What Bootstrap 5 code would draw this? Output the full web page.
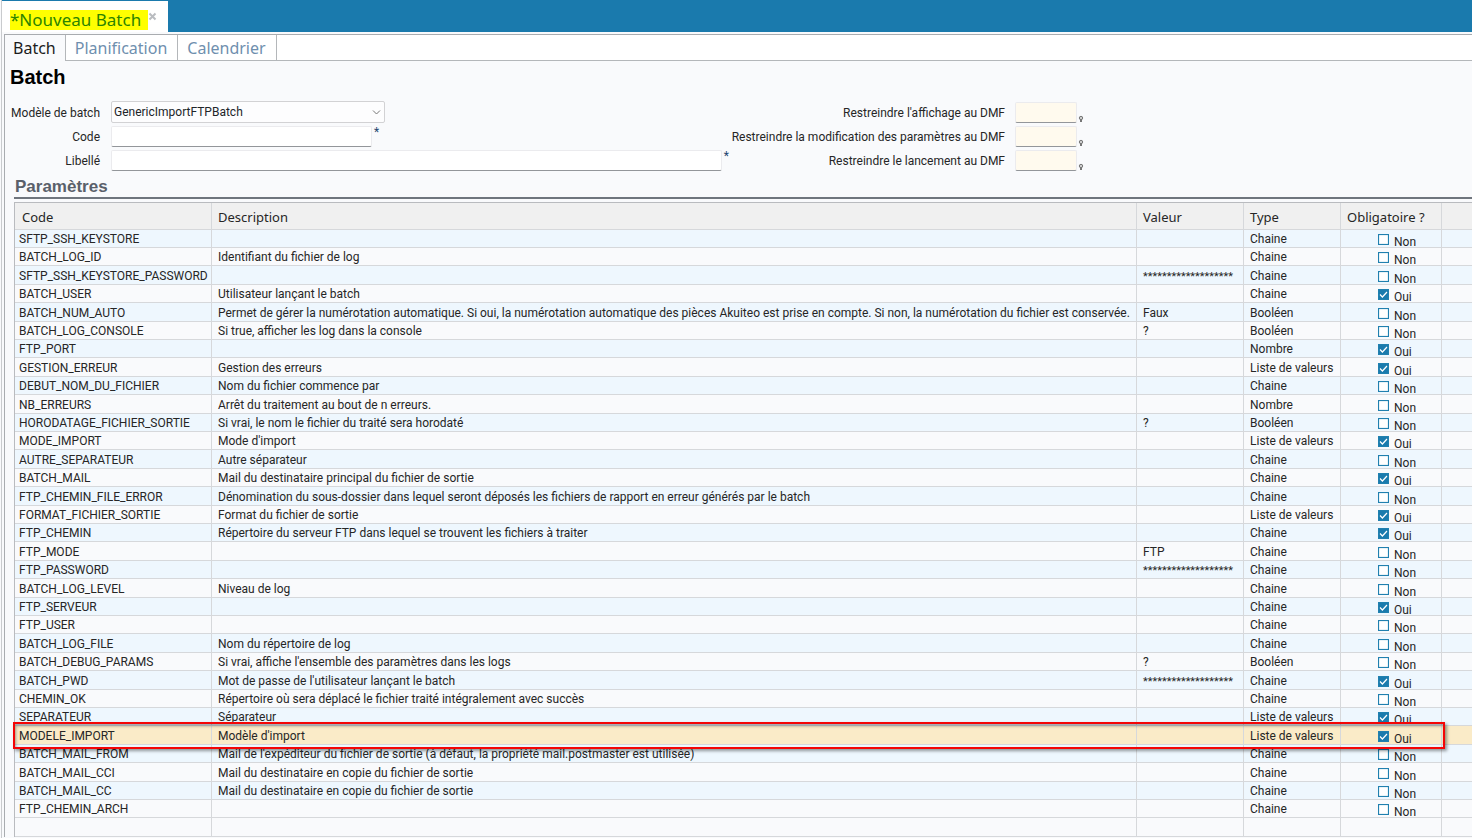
<!DOCTYPE html>
<html lang="fr">
<head>
<meta charset="utf-8">
<meta name="viewport" content="width=device-width, initial-scale=1">
<title>Nouveau Batch</title>
<link href="https://cdn.jsdelivr.net/npm/bootstrap@5.3.0/dist/css/bootstrap.min.css" rel="stylesheet">
<style>
  body { font-family: Roboto, "Noto Sans", sans-serif; font-size: 12px; line-height: 17px; color: #262626; background: #f9fafc; }
  .frame-edge { border-left: 1px solid #c9cbce; margin-left: 1px; padding-left: 2px; }
  .top-bar { height: 32px; background: #1a7aad; padding-top: 1px; margin-left: -2px; }
  .doc-tab { width: 166px; height: 31px; background: #fff; padding: 9px 0 0 8px; }
  .doc-title { background: #ff0; color: #2c8400; font-family: "Noto Sans", sans-serif; font-size: 17px; line-height: 20px; height: 20px; width: 138px; white-space: nowrap; text-decoration: none; }
  .close-tab { width: 9px; height: 9px; margin: 2px 0 0 0; }
  .panel { border-left: 1px solid #a9acb0; border-top: 1px solid #a9acb0; margin-top: 2px; }
  .sub-tabs { background: #fff; height: 26px; flex-wrap: nowrap; border-bottom: 1px solid #b4b7ba; }
  .sub-tabs .nav-link { font-family: "Noto Sans", sans-serif; font-size: 16px; line-height: 23px; height: 25px; padding: 2px 9px 0 8px; color: #6f8fae; border-right: 1px solid #b4b7ba; border-radius: 0; }
  .sub-tabs .nav-link.active { color: #1c1c1c; background: #f9fafc; height: 26px; }
  .sub-tabs .nav-link + .nav-link { padding: 2px 10px 0 9px; }
  h1, h2 { font-family: "Liberation Sans", Arial, sans-serif; font-weight: 700; margin: 0; }
  h1 { font-size: 20px; line-height: 24px; color: #000; padding: 4px 0 0 5px; }
  h2 { font-size: 17px; line-height: 20px; color: #5a606a; border-bottom: 2px solid #6f757d; padding: 1px 0 0 1px; }
  .batch-form { padding: 12px 0 2px 5px; }
  .left-fields { width: 719px; }
  .left-fields label { width: 90px; text-align: right; margin-right: 11px; white-space: nowrap; padding-top: 1px; }
  .right-fields label { width: 276px; text-align: right; margin-right: 10px; white-space: nowrap; padding-top: 1px; }
  .field-row { display: flex; align-items: center; height: 21px; margin-bottom: 3px; }
  .field-row.first { height: 22px; align-items: end; }
  .field-row.first label { line-height: 20px; }
  .line-input { height: 21px; padding: 0 3px; border: 1px solid #ebebee; border-bottom-color: #93969a; border-radius: 2px; background: #fff; font-size: 12px; }
  .line-input.dmf { width: 62px; background: #fffaee; }
  .code-input { width: 261px; }
  .model-select { width: 274px; height: 22px; padding: 0 2px; border: 1px solid #d2d2d4; border-radius: 2px; font-size: 12px; line-height: 20px; background-color: #fdfdfe; background-image: url("data:image/svg+xml,%3Csvg xmlns='http://www.w3.org/2000/svg' viewBox='0 0 9 9'%3E%3Cpath d='M1 2.5 4.5 6 8 2.5' fill='none' stroke='%23777'/%3E%3C/svg%3E"); background-position: right 3px center; background-size: 9px 9px; }
  .req { color: #23466e; align-self: start; margin-left: 2px; line-height: 12px; }
  .pin { align-self: end; margin: 0 0 0 1px; width: 6px; height: 8px; }
  .params { margin-left: 9px; }
  .params-table { table-layout: fixed; width: 100%; margin: 3px 0 0; border-collapse: separate; border-spacing: 0; border-top: 1px solid #b9bbbf; border-left: 1px solid #b9bbbf; color: inherit; }
  .params-table > :not(caption) > * > * { padding: 2px 6px 0; border: 0 solid #d6d8db; border-width: 0 1px 1px 0; white-space: nowrap; box-shadow: none; vertical-align: middle; height: 18px; line-height: 15px; color: inherit; }
  .params-table > thead > tr > th { height: 27px; background: #f0f0f0; font-family: "Noto Sans", sans-serif; font-size: 13px; font-weight: 400; line-height: 24px; }
  .params-table > tbody > tr > td:first-child { padding-left: 4px; }
  .params-table > thead > tr > th:first-child { padding-left: 7px; }
  .params-table > tbody > tr > td { background: #f9fafc; }
  .params-table > tbody > tr:nth-child(odd) > td { background: #eef7fe; }
  .params-table > tbody > tr:nth-child(5n+3) > td, .params-table > tbody > tr:nth-child(5n) > td { height: 19px; }
  .params-table > tbody > tr.chosen > td { background: #faebc8; }
  .params-table > tbody > tr.blank > td { background: #f9fafc; }
  .params-table tr > :last-child { border-right: 0; }
  .masked { font-size: 11px; }
  .chosen { position: relative; }
  .callout-box { position: absolute; left: -2px; right: 27px; top: -4px; bottom: -4px; border: 2px solid #f40505; box-shadow: 2px 2px 3px rgba(0,0,0,.4), inset 1px 2px 3px rgba(0,0,0,.35); pointer-events: none; }
  .flag { display: flex; align-items: center; height: 15px; margin-left: 31px; }
  .flag span { margin: 6px 0 0 5px; }
  .flag input { appearance: none; width: 11px; height: 11px; margin: 0; border: 1px solid #2080af; background: #fff; flex: none; box-shadow: inset 0 0 1px #2080af; }
  .flag input:checked { background: #1a7aad url("data:image/svg+xml,%3Csvg xmlns='http://www.w3.org/2000/svg' viewBox='0 0 9 9'%3E%3Cpath d='M1 4.5 3.4 7 8 2' fill='none' stroke='%23fff' stroke-width='1.2'/%3E%3C/svg%3E"); }
</style>
</head>
<body>
<div class="frame-edge min-vh-100">
  <header class="top-bar">
    <div class="doc-tab d-flex align-items-start">
      <a class="doc-title" href="#">*Nouveau Batch</a>
      <button class="close-tab btn p-0 border-0 d-flex" aria-label="Fermer"><svg width="9" height="9" viewBox="0 0 9 9"><path d="M1.5 1.5l6 6m0-6l-6 6" stroke="#b9bcc0" stroke-width="2"/></svg></button>
    </div>
  </header>
  <main class="panel">
    <nav class="nav sub-tabs">
      <a class="nav-link active" href="#">Batch</a>
      <a class="nav-link" href="#">Planification</a>
      <a class="nav-link" href="#">Calendrier</a>
    </nav>
    <h1>Batch</h1>
    <form class="batch-form d-flex">
      <div class="left-fields">
        <div class="field-row first"><label for="model">Modèle de batch</label><select id="model" class="form-select model-select"><option>GenericImportFTPBatch</option></select></div>
        <div class="field-row"><label for="code">Code</label><input id="code" class="line-input code-input" type="text"><span class="req">*</span></div>
        <div class="field-row"><label for="lib">Libellé</label><input id="lib" class="line-input flex-grow-1" type="text"><span class="req">*</span></div>
      </div>
      <div class="right-fields">
        <div class="field-row first"><label for="d1">Restreindre l'affichage au DMF</label><input id="d1" class="line-input dmf" type="text"><svg class="pin" viewBox="0 0 6 8"><circle cx="3" cy="3" r="1.7" fill="#ccc" stroke="#777"/><path d="M3 4.5V7" stroke="#777" stroke-width="2"/></svg></div>
        <div class="field-row"><label for="d2">Restreindre la modification des paramètres au DMF</label><input id="d2" class="line-input dmf" type="text"><svg class="pin" viewBox="0 0 6 8"><circle cx="3" cy="3" r="1.7" fill="#ccc" stroke="#777"/><path d="M3 4.5V7" stroke="#777" stroke-width="2"/></svg></div>
        <div class="field-row"><label for="d3">Restreindre le lancement au DMF</label><input id="d3" class="line-input dmf" type="text"><svg class="pin" viewBox="0 0 6 8"><circle cx="3" cy="3" r="1.7" fill="#ccc" stroke="#777"/><path d="M3 4.5V7" stroke="#777" stroke-width="2"/></svg></div>
      </div>
    </form>
    <section class="params">
      <h2>Paramètres</h2>
      <table class="table params-table">
        <colgroup><col width="197"><col><col width="107"><col width="97"><col width="101"><col width="30"></colgroup>
        <thead><tr><th>Code</th><th>Description</th><th>Valeur</th><th>Type</th><th>Obligatoire ?</th><th></th></tr></thead>
        <tbody id="rows"></tbody>
      </table>
    </section>
  </main>
</div>
<script src="https://cdn.jsdelivr.net/npm/bootstrap@5.3.0/dist/js/bootstrap.bundle.min.js"></script>
<script>
  const C = 'Chaine', B = 'Booléen', N = 'Nombre', L = 'Liste de valeurs', S = '<span class="masked">*******************</span>';
  const params = [
    ['SFTP_SSH_KEYSTORE', '', '', C, 0],
    ['BATCH_LOG_ID', 'Identifiant du fichier de log', '', C, 0],
    ['SFTP_SSH_KEYSTORE_PASSWORD', '', S, C, 0],
    ['BATCH_USER', 'Utilisateur lançant le batch', '', C, 1],
    ['BATCH_NUM_AUTO', 'Permet de gérer la numérotation automatique. Si oui, la numérotation automatique des pièces Akuiteo est prise en compte. Si non, la numérotation du fichier est conservée.', 'Faux', B, 0],
    ['BATCH_LOG_CONSOLE', 'Si true, afficher les log dans la console', '?', B, 0],
    ['FTP_PORT', '', '', N, 1],
    ['GESTION_ERREUR', 'Gestion des erreurs', '', L, 1],
    ['DEBUT_NOM_DU_FICHIER', 'Nom du fichier commence par', '', C, 0],
    ['NB_ERREURS', 'Arrêt du traitement au bout de n erreurs.', '', N, 0],
    ['HORODATAGE_FICHIER_SORTIE', 'Si vrai, le nom le fichier du traité sera horodaté', '?', B, 0],
    ['MODE_IMPORT', "Mode d'import", '', L, 1],
    ['AUTRE_SEPARATEUR', 'Autre séparateur', '', C, 0],
    ['BATCH_MAIL', 'Mail du destinataire principal du fichier de sortie', '', C, 1],
    ['FTP_CHEMIN_FILE_ERROR', 'Dénomination du sous-dossier dans lequel seront déposés les fichiers de rapport en erreur générés par le batch', '', C, 0],
    ['FORMAT_FICHIER_SORTIE', 'Format du fichier de sortie', '', L, 1],
    ['FTP_CHEMIN', 'Répertoire du serveur FTP dans lequel se trouvent les fichiers à traiter', '', C, 1],
    ['FTP_MODE', '', 'FTP', C, 0],
    ['FTP_PASSWORD', '', S, C, 0],
    ['BATCH_LOG_LEVEL', 'Niveau de log', '', C, 0],
    ['FTP_SERVEUR', '', '', C, 1],
    ['FTP_USER', '', '', C, 0],
    ['BATCH_LOG_FILE', 'Nom du répertoire de log', '', C, 0],
    ['BATCH_DEBUG_PARAMS', "Si vrai, affiche l'ensemble des paramètres dans les logs", '?', B, 0],
    ['BATCH_PWD', "Mot de passe de l'utilisateur lançant le batch", S, C, 1],
    ['CHEMIN_OK', 'Répertoire où sera déplacé le fichier traité intégralement avec succès', '', C, 0],
    ['SEPARATEUR', 'Séparateur', '', L, 1],
    ['MODELE_IMPORT', "Modèle d'import", '', L, 1],
    ['BATCH_MAIL_FROM', "Mail de l'expéditeur du fichier de sortie (à défaut, la propriété mail.postmaster est utilisée)", '', C, 0],
    ['BATCH_MAIL_CCI', 'Mail du destinataire en copie du fichier de sortie', '', C, 0],
    ['BATCH_MAIL_CC', 'Mail du destinataire en copie du fichier de sortie', '', C, 0],
    ['FTP_CHEMIN_ARCH', '', '', C, 0]
  ];
  document.getElementById('rows').innerHTML = params.map(([code, desc, val, type, on]) => {
    const chosen = code === 'MODELE_IMPORT';
    return `<tr${chosen ? ' class="chosen"' : ''}><td>${code}</td><td>${desc}</td><td>${val}</td><td>${type}</td>` +
      `<td><label class="flag"><input type="checkbox"${on ? ' checked' : ''}><span>${on ? 'Oui' : 'Non'}</span></label></td>` +
      `<td>${chosen ? '<div class="callout-box"></div>' : ''}</td></tr>`;
  }).join('') + '<tr class="blank"><td></td><td></td><td></td><td></td><td></td><td></td></tr>';
</script>
</body>
</html>
